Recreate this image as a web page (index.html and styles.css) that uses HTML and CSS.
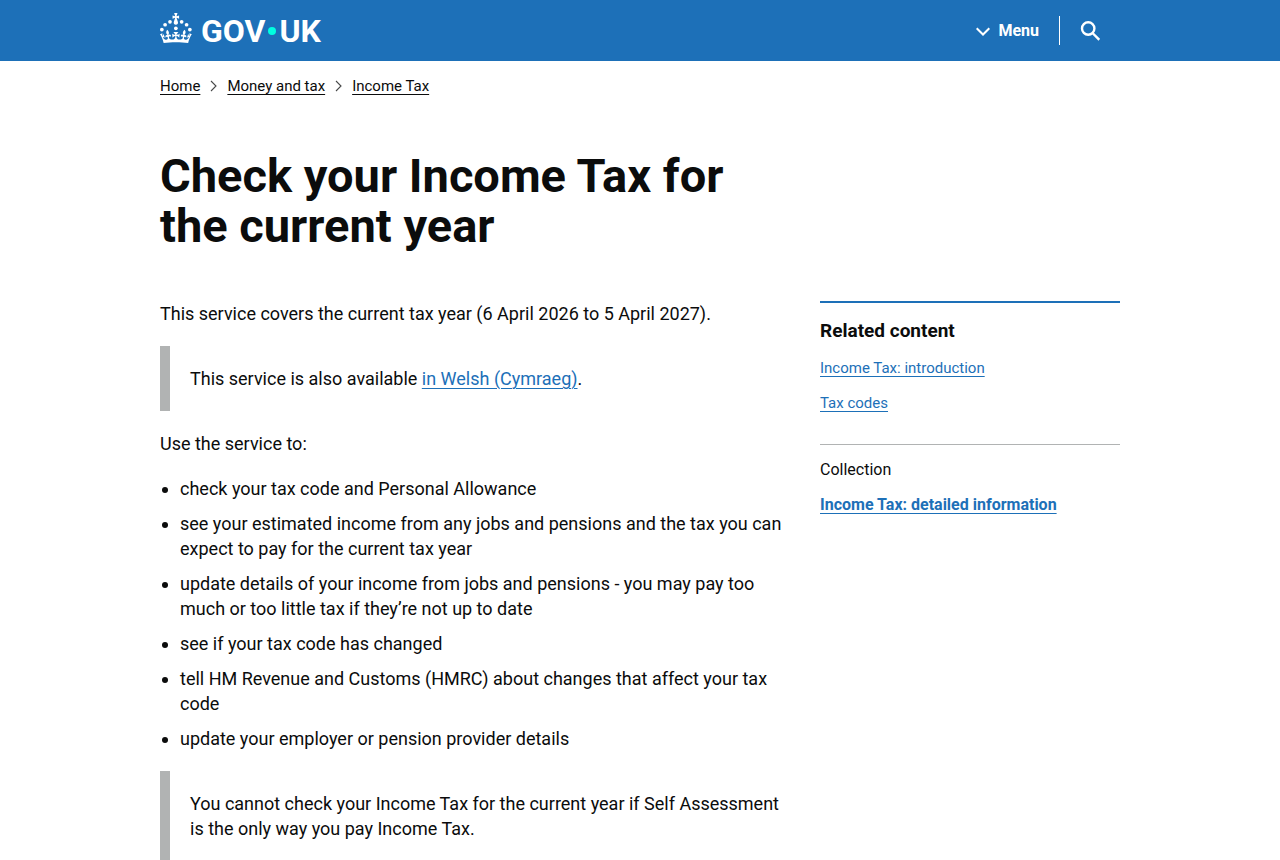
FILE: index.html
```html
<!DOCTYPE html>
<html lang="en">
<head>
<meta charset="utf-8">
<meta name="viewport" content="width=device-width, initial-scale=1">
<title>Check your Income Tax for the current year - GOV.UK</title>
<link rel="stylesheet" href="styles.css">
</head>
<body>
<header class="header">
  <div class="container header-inner">
    <a class="logo" href="#" aria-label="GOV.UK">
      <svg class="crown" viewBox="0 0 64 60" aria-hidden="true">
        <circle cx="20" cy="17.6" r="3.7"/><circle cx="10.2" cy="23.5" r="3.7"/><circle cx="3.7" cy="33.2" r="3.7"/><circle cx="31.7" cy="30.6" r="3.7"/><circle cx="43.3" cy="17.6" r="3.7"/><circle cx="53.2" cy="23.5" r="3.7"/><circle cx="59.7" cy="33.2" r="3.7"/>
        <path d="M33.1,9.8c.2-.1.3-.3.5-.5l4.6,2.4v-6.8l-4.6,1.5c-.1-.2-.3-.3-.5-.5l1.9-5.9h-6.7l1.9,5.9c-.2.1-.3.3-.5.5l-4.6-1.5v6.8l4.6-2.4c.1.2.3.3.5.5l-2.6,8c-.9,2.8,1.2,5.7,4.1,5.7h0c3,0,5.1-2.9,4.1-5.7l-2.6-8ZM37,37.9s-3.4,3.8-4.1,6.1c2.2,0,4.2-.5,6.4-2.8l-.7,8.5c-2-2.8-4.4-4.1-5.7-3.8.1,3.1.5,6.7,5.8,7.2,3.7.3,6.7-1.5,7-3.8.4-2.6-2-4.3-3.7-1.6-1.4-4.5,2.4-6.1,4.9-3.2-1.9-4.5-1.8-7.7,2.4-10.9,3,4,2.6,7.3-1.2,11.1,2.4-1.3,6.2,0,4,4.6-1.2-2.8-3.7-2.2-4.2.2-.3,1.7.7,3.7,3,4.2,1.9.3,4.7-.9,7-5.9-1.3,0-2.4.7-3.9,1.7l2.4-8c.6,2.3,1.4,3.7,2.2,4.5.6-1.6.5-2.8,0-5.3l5,1.8c-2.6,3.6-5.2,8.7-7.3,17.5-7.4-1.1-15.7-1.7-24.5-1.7h0c-8.8,0-17.1.6-24.5,1.7-2.1-8.9-4.7-13.9-7.3-17.5l5-1.8c-.5,2.5-.6,3.7,0,5.3.8-.8,1.6-2.3,2.2-4.5l2.4,8c-1.5-1-2.6-1.7-3.9-1.7,2.3,5,5.2,6.2,7,5.9,2.3-.4,3.3-2.4,3-4.2-.5-2.4-3-3.1-4.2-.2-2.2-4.6,1.6-6,4-4.6-3.7-3.7-4.2-7.1-1.2-11.1,4.2,3.2,4.3,6.4,2.4,10.9,2.5-2.8,6.3-1.3,4.9,3.2-1.8-2.7-4.1-1-3.7,1.6.3,2.3,3.3,4.1,7,3.8,5.4-.5,5.7-4.2,5.8-7.2-1.3-.2-3.7,1-5.7,3.8l-.7-8.5c2.2,2.3,4.2,2.7,6.4,2.8-.7-2.3-4.1-6.1-4.1-6.1h10.6Z"/>
      </svg>
      <span class="wordmark"><span>GOV</span><span class="dot"></span><span>UK</span></span>
    </a>
    <nav class="header-nav" aria-label="Menu">
      <button class="menu-button" type="button">
        <svg class="menu-chevron" viewBox="0 0 14 10" aria-hidden="true"><path d="M.7 2.2L7 8.5l6.3-6.3"/></svg>
        Menu
      </button>
      <button class="search-button" type="button" aria-label="Search GOV.UK">
        <svg class="search-icon" viewBox="0 0 20 20" aria-hidden="true"><circle cx="8.2" cy="7.5" r="6.2"/><path d="M12.5 12l6.8 6.8"/></svg>
      </button>
    </nav>
  </div>
</header>
<div class="container">
  <nav aria-label="Breadcrumb">
    <ol class="breadcrumbs">
      <li><a href="#">Home</a></li>
      <li><svg class="crumb-chevron" viewBox="0 0 7 12" aria-hidden="true"><path d="M1 1l5 5-5 5"/></svg><a href="#">Money and tax</a></li>
      <li><svg class="crumb-chevron" viewBox="0 0 7 12" aria-hidden="true"><path d="M1 1l5 5-5 5"/></svg><a href="#">Income Tax</a></li>
    </ol>
  </nav>
  <div class="grid">
    <h1 class="title">Check your Income Tax for the current year</h1>
    <main class="content">
      <p>This service covers the current tax year (6 April 2026 to 5 April 2027).</p>
      <div class="inset"><p>This service is also available <a class="link" href="#">in Welsh (Cymraeg)</a>.</p></div>
      <p>Use the service to:</p>
      <ul class="tasks">
        <li>check your tax code and Personal Allowance</li>
        <li>see your estimated income from any jobs and pensions and the tax you can expect to pay for the current tax year</li>
        <li>update details of your income from jobs and pensions - you may pay too much or too little tax if they’re not up to date</li>
        <li>see if your tax code has changed</li>
        <li>tell HM Revenue and Customs (HMRC) about changes that affect your tax code</li>
        <li>update your employer or pension provider details</li>
      </ul>
      <div class="inset"><p>You cannot check your Income Tax for the current year if Self Assessment is the only way you pay Income Tax.</p></div>
    </main>
    <aside class="related">
      <h2 class="related-title">Related content</h2>
      <ul class="related-list">
        <li><a class="link" href="#">Income Tax: introduction</a></li>
        <li><a class="link" href="#">Tax codes</a></li>
      </ul>
      <section class="collection">
        <h3 class="collection-title">Collection</h3>
        <a class="link collection-link" href="#">Income Tax: detailed information</a>
      </section>
    </aside>
  </div>
</div>
</body>
</html>
```
FILE: styles.css
```css
* { box-sizing: border-box; }
body {
  margin: 0;
  background: #fff;
  color: #0b0c0c;
  font: 18px/25px Roboto, "Liberation Sans", sans-serif;
}
h1, h2, h3, p, ul, ol { margin: 0; padding: 0; }
a { text-underline-offset: 3px; text-decoration-thickness: 1px; }
.container { max-width: 1020px; margin: 0 auto; padding: 0 30px; }

.header { background: #1d70b8; color: #fff; }
.header-inner { display: flex; justify-content: space-between; align-items: center; min-height: 61px; }
.logo { display: flex; align-items: center; gap: 9px; color: #fff; text-decoration: none; }
.crown { width: 32px; height: 30px; fill: #fff; margin-bottom: 6px; }
.wordmark { display: flex; align-items: center; gap: 3px; font: bold 32px/40px Roboto, "Liberation Sans", sans-serif; }
.dot { width: 8px; height: 8px; border-radius: 50%; background: #00ffe0; }
.header-nav { display: flex; align-items: center; }
.menu-button, .search-button { background: none; border: 0; color: #fff; padding: 0 20px; min-height: 29px; cursor: pointer; }
.menu-button { display: flex; align-items: center; gap: 8px; font: bold 16px/25px Roboto, "Liberation Sans", sans-serif; border-right: 1px solid #fff; }
.menu-chevron { width: 14px; height: 10px; fill: none; stroke: #fff; stroke-width: 2; }
.search-button { display: flex; align-items: center; }
.search-icon { width: 20px; height: 20px; fill: none; stroke: #fff; stroke-width: 2.4; }

.breadcrumbs { display: flex; flex-wrap: wrap; list-style: none; margin-top: 15px; font-size: 15px; line-height: 20px; }
.breadcrumbs li { display: flex; align-items: center; }
.breadcrumbs a { color: #0b0c0c; }
.crumb-chevron { width: 7px; height: 12px; margin: 0 10px; fill: none; stroke: #484949; stroke-width: 1.1; }

.grid { display: grid; grid-template-columns: minmax(0, 21fr) minmax(0, 10fr); column-gap: 30px; margin-top: 55px; }
.title { grid-column: 1; margin-bottom: 50px; font-size: 47px; line-height: 50px; font-weight: bold; }
.content { grid-column: 1; display: flex; flex-direction: column; gap: 20px; }
.inset { border-left: 10px solid #b1b3b3; padding: 20px 0 20px 20px; }
.tasks { padding-left: 20px; display: grid; gap: 10px; }
.link { color: #1d70b8; }

.related { grid-column: 2; border-top: 2px solid #1d70b8; padding-top: 15px; font-size: 15px; line-height: 20px; }
.related-title { font-size: 19px; line-height: 25px; }
.related-list { list-style: none; display: grid; gap: 15px; margin-top: 15px; }
.collection { border-top: 1px solid #b1b3b3; margin-top: 31px; padding-top: 15px; }
.collection-title { font-size: 16px; font-weight: normal; margin-bottom: 15px; }
.collection-link { font-size: 16px; font-weight: bold; }
@media (max-width: 700px) {
  .grid { display: block; }
  .related { margin-top: 30px; }
}
```
